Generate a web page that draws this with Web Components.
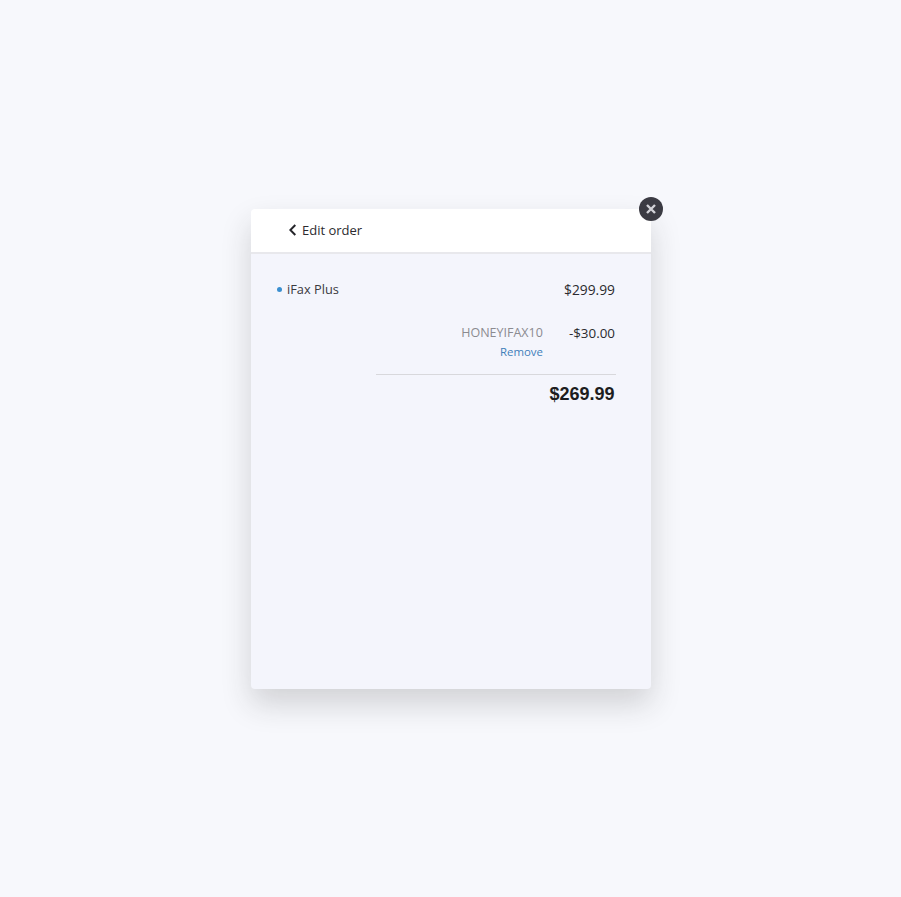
<!DOCTYPE html>
<html lang="en">
<head>
<meta charset="utf-8">
<title>Edit order</title>
<style>
    html, body { height: 100%; }
    body {
        margin: 0;
        background: #f7f8fc;
        font-family: "Open Sans", "Noto Sans", sans-serif;
        color: #2b2b2f;
    }
</style>
</head>
<body>
<order-dialog>
    <order-line name="iFax Plus" price="$299.99"></order-line>
    <coupon-line code="HONEYIFAX10" amount="-$30.00"></coupon-line>
    <order-total amount="$269.99"></order-total>
</order-dialog>

<script>
// The modal card, with its header and close button.
class OrderDialog extends HTMLElement {
    connectedCallback() {
        this.attachShadow({ mode: "open" });
        this.shadowRoot.innerHTML = `
            <style>
                :host {
                    display: flex;
                    height: 100%;
                    align-items: center;
                    justify-content: center;
                    padding: 1px 0 0 1px;
                    box-sizing: border-box;
                }
                .card {
                    position: relative;
                    width: 400px;
                    height: 480px;
                    display: flex;
                    flex-direction: column;
                    background: #f4f5fc;
                    border-radius: 4px;
                    box-shadow: 0 15px 30px rgba(40, 40, 40, 0.18);
                }
                header {
                    height: 45px;
                    flex: none;
                    box-sizing: border-box;
                    display: flex;
                    align-items: center;
                    gap: 5px;
                    padding: 0 0 1px 38px;
                    background: #fff;
                    border-bottom: 2px solid #e8e8ec;
                    border-radius: 4px 4px 0 0;
                    font-size: 13px;
                    color: #2b2b2f;
                }
                header svg { display: block; }
                main {
                    padding: 26px 36px 0 26px;
                    display: flex;
                    flex-direction: column;
                }
                .close {
                    position: absolute;
                    top: -12px;
                    right: -12px;
                    width: 24px;
                    height: 24px;
                    border-radius: 50%;
                    background: #3b3b43;
                    display: flex;
                    align-items: center;
                    justify-content: center;
                }
                .close svg { margin: 0 1px 0 0; }
            </style>
            <div class="card">
                <header>
                    <svg width="8" height="12" viewBox="0 0 8 12" fill="none" stroke="#25252a" stroke-width="2">
                        <path d="M6.3 1 1.3 6l5 5"/>
                    </svg>
                    <span>Edit order</span>
                </header>
                <main><slot></slot></main>
                <div class="close">
                    <svg width="10" height="10" viewBox="0 0 10 10" stroke="#d2d2d8" stroke-width="2.4">
                        <path d="M1 1l8 8M9 1l-8 8"/>
                    </svg>
                </div>
            </div>
        `;
    }
}

// Product row: blue bullet, name, price.
class OrderLine extends HTMLElement {
    connectedCallback() {
        this.attachShadow({ mode: "open" });
        this.shadowRoot.innerHTML = `
            <style>
                :host {
                    display: flex;
                    justify-content: space-between;
                    align-items: center;
                    height: 18px;
                    font-size: 13px;
                    color: #2b2b2f;
                }
                .name { display: flex; align-items: center; gap: 5px; color: #3a3a40; font-size: 12.8px; }
                .dot { width: 5px; height: 5px; border-radius: 50%; background: #3a8fd0; }
                .price { font-size: 13.8px; padding-top: 1px; }
            </style>
            <span class="name"><span class="dot"></span>${this.getAttribute("name")}</span>
            <span class="price">${this.getAttribute("price")}</span>
        `;
    }
}

// Coupon row: code and discount, with a remove link under the code.
class CouponLine extends HTMLElement {
    connectedCallback() {
        this.attachShadow({ mode: "open" });
        this.shadowRoot.innerHTML = `
            <style>
                :host {
                    display: grid;
                    grid-template-columns: auto auto;
                    justify-content: end;
                    column-gap: 26px;
                    margin-top: 26px;
                    font-size: 13.4px;
                    line-height: 18px;
                }
                .code { color: #8b8b90; font-size: 12.5px; text-align: right; }
                .amount { color: #2b2b2f; }
                .remove { color: #3f7fba; font-size: 11.4px; text-align: right; line-height: 20px; }
            </style>
            <span class="code">${this.getAttribute("code")}</span>
            <span class="amount">${this.getAttribute("amount")}</span>
            <span class="remove">Remove</span>
        `;
    }
}

// Rule and order total.
class OrderTotal extends HTMLElement {
    connectedCallback() {
        this.attachShadow({ mode: "open" });
        this.shadowRoot.innerHTML = `
            <style>
                :host {
                    display: block;
                    margin: 12px -1px 0 99px;
                    padding-top: 8px;
                    padding-right: 1.5px;
                    border-top: 1px solid #d8d8dc;
                    text-align: right;
                    font: bold 18px/22px "Liberation Sans", Arial, sans-serif;
                    color: #1d1d20;
                }
            </style>
            ${this.getAttribute("amount")}
        `;
    }
}

customElements.define("order-dialog", OrderDialog);
customElements.define("order-line", OrderLine);
customElements.define("coupon-line", CouponLine);
customElements.define("order-total", OrderTotal);
</script>
</body>
</html>
